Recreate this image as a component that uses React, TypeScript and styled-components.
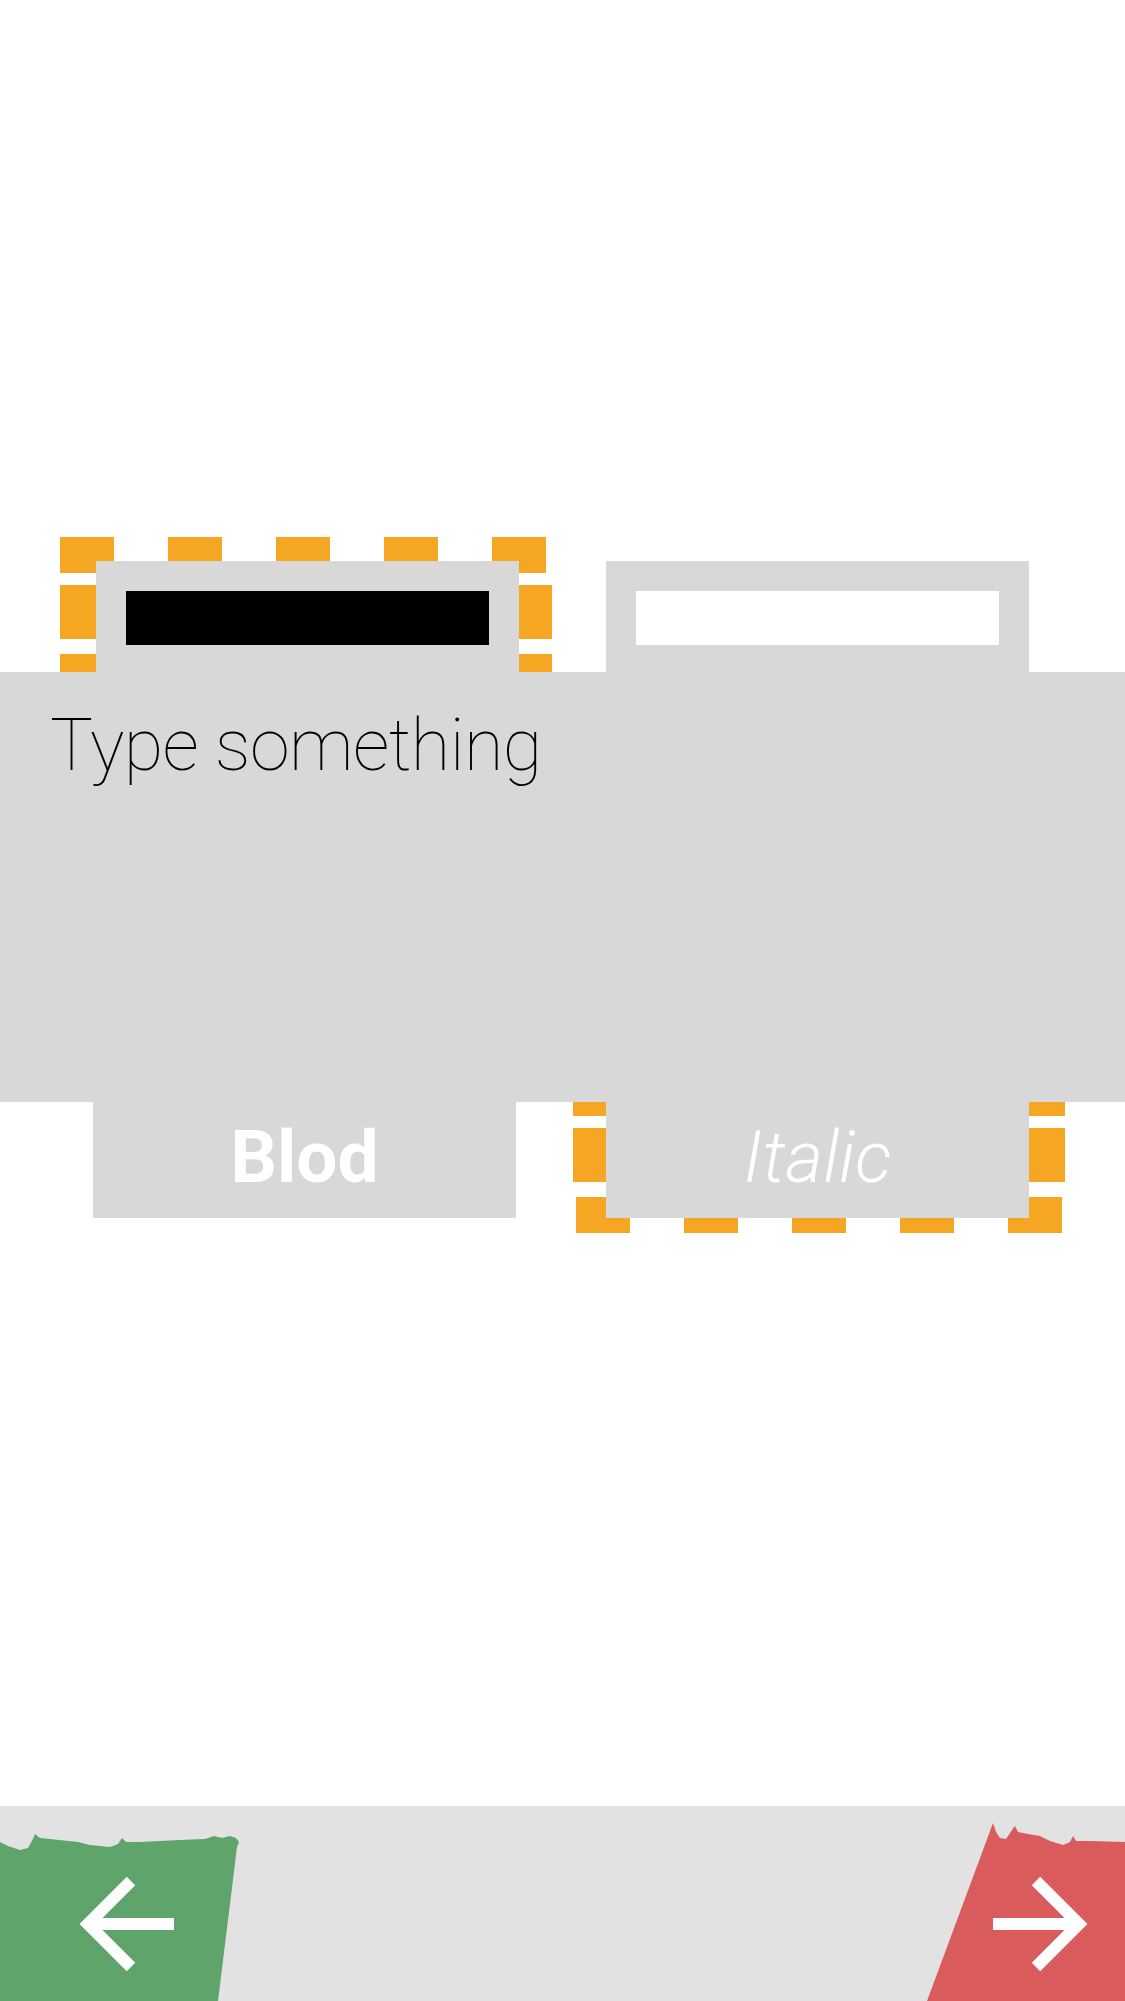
import styled, { createGlobalStyle } from "styled-components";

const ORANGE = "#f5a623";
const PANEL = "#d8d8d8";

const GlobalStyle = createGlobalStyle`
  html, body {
    margin: 0;
    padding: 0;
    background: #ffffff;
  }
  * {
    box-sizing: border-box;
  }
`;

const App = () => {
  return (
    <Page>
      <GlobalStyle />
      <TabRow>
        <Frame $edge="top">
          <Tab>
            <ColorBar $color="#000000" />
          </Tab>
        </Frame>
        <Tab $offset={54}>
          <ColorBar $color="#ffffff" />
        </Tab>
      </TabRow>
      <Panel>
        <Placeholder>Type something</Placeholder>
      </Panel>
      <StyleRow>
        <StyleButton $weight={700}>Blod</StyleButton>
        <Frame $edge="bottom">
          <StyleButton $weight={300} $italic>
            Italic
          </StyleButton>
        </Frame>
      </StyleRow>
      <BottomBar>
        <NavButton $width={245} aria-label="Back">
          <svg width="245" height="195" viewBox="0 0 245 195">
            <path
              fill="#5ea46b"
              d="M0 36 L8 40 L20 44 L28 42 L33 33 L35 28 L40 32 L50 33 L78 36 L90 39 L110 41 L118 38 L122 32 L126 36 L140 36 L180 34 L205 33 L214 30 L222 32 L230 30 L236 32 L239 36 L237 41 L218 195 L0 195 Z"
            />
            <path
              d="M131 75 L88 118 L131 161 M90 118 H174"
              fill="none"
              stroke="#ffffff"
              strokeWidth="12"
              strokeLinecap="butt"
              strokeLinejoin="miter"
            />
          </svg>
        </NavButton>
        <NavButton $width={225} aria-label="Next">
          <svg width="225" height="195" viewBox="0 0 225 195">
            <path
              fill="#d95b5b"
              d="M93 17 L96 26 L100 32 L106 33 L112 24 L115 20 L118 26 L128 28 L140 30 L150 35 L163 39 L170 36 L173 30 L176 35 L190 35 L225 36 L225 195 L27 195 Z"
            />
            <path
              d="M136 75 L179 118 L136 161 M93 118 H177"
              fill="none"
              stroke="#ffffff"
              strokeWidth="12"
              strokeLinecap="butt"
              strokeLinejoin="miter"
            />
          </svg>
        </NavButton>
      </BottomBar>
    </Page>
  );
};

export default App;

const Page = styled.div`
  display: flex;
  flex-direction: column;
  min-height: 2001px;
  padding-top: 537px;
  background: #ffffff;
  overflow: hidden;
`;

const TabRow = styled.div`
  display: flex;
  align-items: flex-start;
  height: 135px;
  padding-left: 60px;
`;

const dashH = `repeating-linear-gradient(to right, ${ORANGE} 0 54px, transparent 54px 108px)`;
const sideTop = `linear-gradient(to bottom, transparent 0 48px, ${ORANGE} 48px 102px, transparent 102px 117px, ${ORANGE} 117px)`;
const sideBottom = `linear-gradient(to bottom, ${ORANGE} 0 14px, transparent 14px 26px, ${ORANGE} 26px 80px, transparent 80px)`;

const Frame = styled.div<{ $edge: "top" | "bottom" }>`
  display: flex;
  align-items: flex-start;
  width: 492px;
  height: ${(p) => (p.$edge === "top" ? "135px" : "131px")};
  padding: ${(p) => (p.$edge === "top" ? "24px 0 0 36px" : "0 0 0 33px")};
  margin-left: ${(p) => (p.$edge === "top" ? "0" : "57px")};
  background-image: ${(p) =>
    p.$edge === "top"
      ? `${dashH}, ${sideTop}, ${sideTop}`
      : `${dashH}, ${sideBottom}, ${sideBottom}`};
  background-size: 100% 36px, 36px 100%, 36px 100%;
  background-position: ${(p) =>
    p.$edge === "top" ? "0 0, 0 0, 100% 0" : "3px 100%, 0 0, 100% 0"};
  background-repeat: no-repeat;
`;

const Tab = styled.div<{ $offset?: number }>`
  width: 423px;
  height: 111px;
  margin-left: ${(p) => p.$offset ?? 0}px;
  margin-top: ${(p) => (p.$offset ? 24 : 0)}px;
  padding: 30px 30px 0;
  background: ${PANEL};
`;

const ColorBar = styled.div<{ $color: string }>`
  height: 54px;
  background: ${(p) => p.$color};
`;

const Panel = styled.div`
  height: 430px;
  padding: 38px 0 0 50px;
  background: ${PANEL};
`;

const Placeholder = styled.div`
  font-family: Roboto, "Liberation Sans", sans-serif;
  font-weight: 100;
  font-size: 72px;
  line-height: 1;
  letter-spacing: -0.6px;
  color: #000000;
`;

const StyleRow = styled.div`
  display: flex;
  align-items: flex-start;
  height: 131px;
  padding-left: 93px;
`;

const StyleButton = styled.button<{ $weight: number; $italic?: boolean }>`
  display: flex;
  justify-content: center;
  align-items: flex-start;
  width: 423px;
  height: 116px;
  padding: 19px 0 0;
  border: none;
  background: ${PANEL};
  color: #ffffff;
  font-family: Roboto, "Liberation Sans", sans-serif;
  font-size: 73px;
  line-height: 1;
  font-weight: ${(p) => p.$weight};
  font-style: ${(p) => (p.$italic ? "italic" : "normal")};
  cursor: pointer;
`;

const BottomBar = styled.div`
  display: flex;
  justify-content: space-between;
  align-items: stretch;
  height: 195px;
  margin-top: auto;
  background: #e2e2e2;
`;

const NavButton = styled.button<{ $width: number }>`
  display: block;
  width: ${(p) => p.$width}px;
  height: 195px;
  padding: 0;
  border: none;
  background: transparent;
  cursor: pointer;

  svg {
    display: block;
  }
`;
